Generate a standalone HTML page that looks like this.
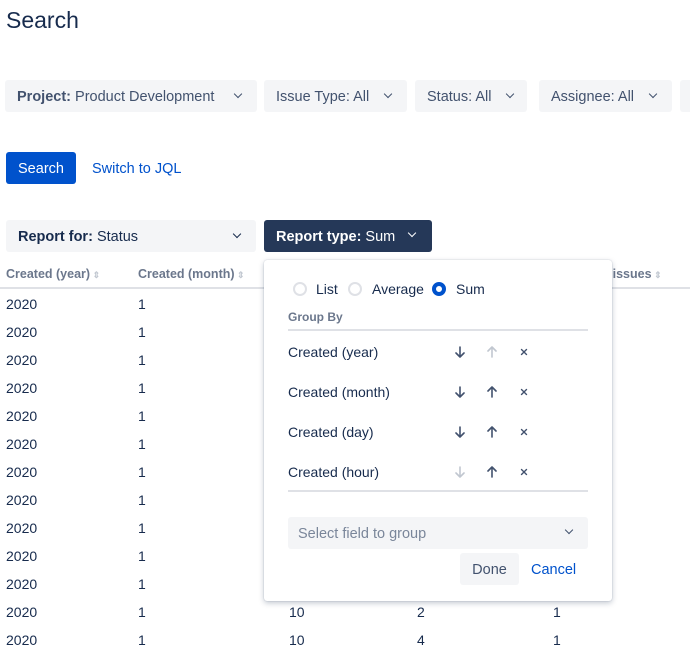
<!DOCTYPE html>
<html><head><style>
*{box-sizing:border-box;margin:0;padding:0}
body{width:690px;height:645px;overflow:hidden;background:#fff;font-family:"Liberation Sans",sans-serif;color:#172b4d;position:relative;font-size:14px}
.a{position:absolute}
h1{position:absolute;left:6px;top:7px;font-size:23px;font-weight:400;color:#172b4d}
.btn{position:absolute;height:32px;background:#f4f5f7;border-radius:3px;line-height:34px;padding-left:12px;color:#42526e;font-size:14.5px;white-space:nowrap;overflow:hidden}
.chev{display:inline-block;width:6px;height:6px;border-right:1.5px solid currentColor;border-bottom:1.5px solid currentColor;transform:rotate(45deg);position:absolute;top:11px}
.th{position:absolute;top:267px;font-size:12.5px;color:#6b778c;font-weight:bold}
.td{position:absolute;font-size:14px;color:#172b4d}
.sort{color:#c1c7d0;font-size:9px}
.pop{position:absolute;z-index:5;left:264px;top:260px;width:348px;height:341px;background:#fff;border-radius:3px;box-shadow:0 2px 6px rgba(9,30,66,.25),0 0 1px rgba(9,30,66,.3)}
.radio{position:absolute;width:14px;height:14px;border-radius:50%;border:2px solid #dfe1e6;top:22px}
.row{position:absolute;left:24px;font-size:14px;color:#172b4d}
svg.ic{position:absolute;width:12px;height:12px;stroke:#42526e;stroke-width:1.6;fill:none;stroke-linecap:round;stroke-linejoin:round}
svg.l{stroke:#c1c7d0}
</style></head><body>
<h1>Search</h1>
<div class="btn" style="left:5px;top:80px;width:252px"><b>Project:</b> Product Development<span class="chev" style="right:16px"></span></div>
<div class="btn" style="left:264px;top:80px;width:143px">Issue Type: All<span class="chev" style="right:16px"></span></div>
<div class="btn" style="left:415px;top:80px;width:112px">Status: All<span class="chev" style="right:14px"></span></div>
<div class="btn" style="left:539px;top:80px;width:133px">Assignee: All<span class="chev" style="right:16px"></span></div>
<div class="btn" style="left:680px;top:80px;width:20px"></div>
<div class="a" style="left:6px;top:152px;width:70px;height:32px;background:#0052cc;border-radius:3px;color:#fff;line-height:34px;text-align:center;font-size:14.5px">Search</div>
<div class="a" style="left:92px;top:161px;color:#0052cc;font-size:14.5px">Switch to JQL</div>
<div class="btn" style="left:6px;top:220px;width:250px;color:#172b4d"><b>Report for:</b> Status<span class="chev" style="right:16px"></span></div>
<div class="btn" style="left:264px;top:220px;width:168px;background:#253858;color:#fff"><b>Report type:</b> Sum<span class="chev" style="right:17px;top:10px"></span></div>
<div class="th" style="left:6px">Created (year)<span class="sort"> ⇕</span></div>
<div class="th" style="left:138px">Created (month)<span class="sort"> ⇕</span></div>
<div class="th" style="left:605px">f issues<span class="sort"> ⇕</span></div>
<div class="a" style="left:0;top:287px;width:690px;height:2px;background:#dfe1e6"></div>
<div id="rows"></div>
<div class="pop">
<div class="radio" style="left:29px"></div><div class="a" style="left:52px;top:21px">List</div>
<div class="radio" style="left:84px"></div><div class="a" style="left:108px;top:21px">Average</div>
<div class="radio" style="left:168px;border:4px solid #0052cc"></div><div class="a" style="left:192px;top:21px">Sum</div>
<div class="a" style="left:24px;top:50px;font-size:12px;font-weight:bold;color:#6b778c">Group By</div>
<div class="a" style="left:24px;top:69px;width:300px;height:2px;background:#dfe1e6"></div>
<div class="row" style="top:84px">Created (year)</div>
<div class="row" style="top:124px">Created (month)</div>
<div class="row" style="top:164px">Created (day)</div>
<div class="row" style="top:204px">Created (hour)</div>
<div id="icons"></div>
<div class="a" style="left:24px;top:230px;width:300px;height:2px;background:#dfe1e6"></div>
<div class="a" style="left:24px;top:257px;width:300px;height:32px;background:#f4f5f7;border-radius:3px;color:#7a869a;line-height:34px;padding-left:10px;font-size:14.5px">Select field to group<span class="chev" style="right:16px;color:#42526e;top:10px"></span></div>
<div class="a" style="left:196px;top:293px;width:59px;height:32px;background:#f4f5f7;border-radius:3px;line-height:34px;text-align:center;color:#42526e;font-size:14.5px">Done</div>
<div class="a" style="left:267px;top:302px;color:#0052cc;font-size:14.5px">Cancel</div>
</div>
<script>
var h='';for(var i=0;i<13;i++){var y=296+i*28;h+='<div class="td" style="left:6px;top:'+y+'px">2020</div><div class="td" style="left:138px;top:'+y+'px">1</div>';}
h+='<div class="td" style="left:289px;top:604px">10</div><div class="td" style="left:417px;top:604px">2</div><div class="td" style="left:553px;top:604px">1</div>';
h+='<div class="td" style="left:289px;top:632px">10</div><div class="td" style="left:417px;top:632px">4</div><div class="td" style="left:553px;top:632px">1</div>';
document.getElementById('rows').innerHTML=h;
var p='';var ys=[86,126,166,206];
var D='<path d="M6 1v10M2 7l4 4 4-4"/>',U='<path d="M6 11V1M2 5l4-4 4 4"/>',X='<path d="M3.5 3.5l5 5M8.5 3.5l-5 5"/>';
for(var j=0;j<4;j++){var y=ys[j];
p+='<svg class="ic'+(j==3?' l':'')+'" style="left:190px;top:'+y+'px" viewBox="0 0 12 12">'+D+'</svg>';
p+='<svg class="ic'+(j==0?' l':'')+'" style="left:222px;top:'+y+'px" viewBox="0 0 12 12">'+U+'</svg>';
p+='<svg class="ic" style="left:254px;top:'+y+'px;stroke-width:1.4" viewBox="0 0 12 12">'+X+'</svg>';}
document.getElementById('icons').innerHTML=p;
</script>
</body></html>
